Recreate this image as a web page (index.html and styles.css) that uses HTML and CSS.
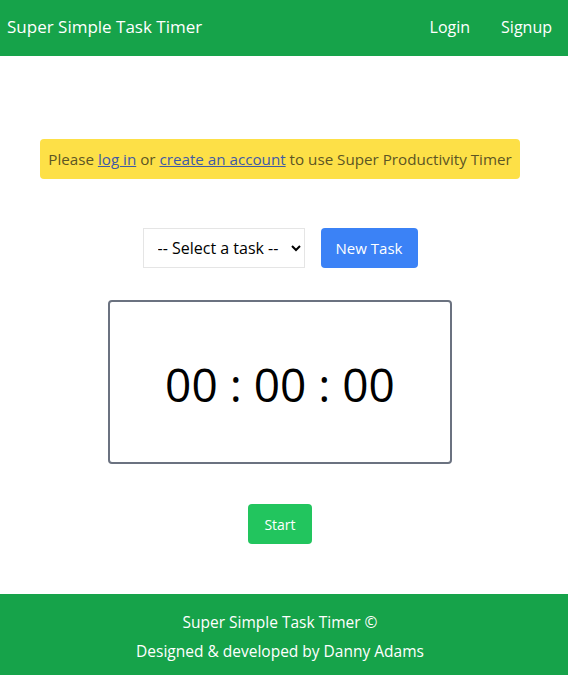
FILE: index.html
```html
<!DOCTYPE html>
<html>
<head>
<meta charset="utf-8">
<link rel="stylesheet" href="styles.css">
</head>
<body>
<header class="nav">
  <span class="brand">Super Simple Task Timer</span>
  <nav class="links"><a href="#">Login</a><a href="#">Signup</a></nav>
</header>
<main class="main">
  <div class="alert">Please <a href="#">log in</a> or <a href="#">create an account</a> to use Super Productivity Timer</div>
  <div class="controls">
    <select class="select"><option>-- Select a task --</option></select>
    <button class="btn btn-blue">New Task</button>
  </div>
  <div class="timer">00 : 00 : 00</div>
  <button class="btn btn-green">Start</button>
</main>
<footer class="footer">
  <p>Super Simple Task Timer ©</p>
  <p>Designed &amp; developed by Danny Adams</p>
</footer>
</body>
</html>
```
FILE: styles.css
```css
* { box-sizing: border-box; }
body {
  margin: 0;
  font-family: "Open Sans", "Noto Sans", sans-serif;
  color: #000;
  background: #fff;
}
.nav {
  height: 56px;
  background: #16a34a;
  display: flex;
  align-items: center;
  justify-content: space-between;
  padding: 0 16px 3px 7px;
  color: #fff;
}
.brand { font-size: 17px; }
.links { display: flex; gap: 31px; }
.links a { color: #fff; text-decoration: none; font-size: 16px; }
.main {
  display: flex;
  flex-direction: column;
  align-items: center;
  padding-top: 83px;
  padding-right: 8px;
  height: 538px;
}
.alert {
  width: 480px;
  height: 40px;
  background: #fde047;
  border-radius: 4px;
  color: #5c5524;
  font-size: 15.2px;
  display: flex;
  align-items: center;
  justify-content: center;
  white-space: pre;
}
.alert a { color: #3f5aa6; }
.controls {
  display: flex;
  gap: 16px;
  margin-top: 49px;
}
.select {
  width: 162px;
  height: 40px;
  border: 1px solid #e5e5e5;
  background: #fff;
  font-family: inherit;
  font-size: 16px;
  padding: 0 8px 0 10px;
  color: #000;
}
.btn {
  border: none;
  border-radius: 4px;
  height: 40px;
  color: #fff;
  font-family: inherit;
  font-size: 15px;
}
.btn-blue { background: #3b82f6; width: 97px; }
.btn-green { background: #22c55e; width: 64px; margin-top: 40px; font-size: 14px; }
.timer {
  margin-top: 32px;
  width: 344px;
  height: 164px;
  border: 2px solid #6b7280;
  border-radius: 4px;
  display: flex;
  align-items: center;
  justify-content: center;
  font-size: 46px;
  padding-top: 4px;
}
.footer {
  height: 81px;
  background: #16a34a;
  color: #fff;
  display: flex;
  flex-direction: column;
  align-items: center;
  justify-content: center;
  gap: 7px;
  font-size: 15.5px;
  padding: 3px 8px 0 0;
}
.footer p { margin: 0; }
```
